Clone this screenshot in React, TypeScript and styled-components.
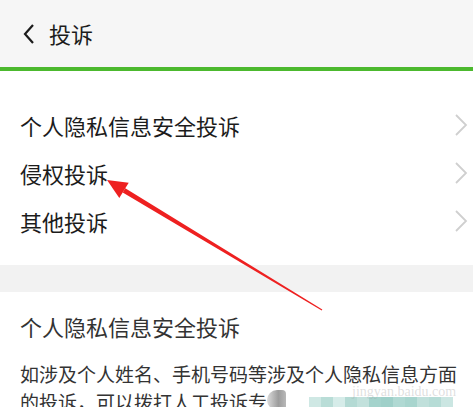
import React from "react";
import styled, { createGlobalStyle } from "styled-components";

const GlobalStyle = createGlobalStyle`
  html, body {
    margin: 0;
    padding: 0;
    background: #fff;
  }
`;

const Page = styled.div`
  position: relative;
  width: 473px;
  height: 407px;
  overflow: hidden;
  background: #fff;
  font-family: "Noto Sans CJK SC", "Noto Sans", sans-serif;
  color: #1c1c1c;
`;

const Header = styled.div`
  height: 67px;
  background: #f6f6f6;
  border-bottom: 4px solid #4cb92e;
  display: flex;
  align-items: center;
  padding-left: 22px;
  gap: 13px;
`;

const Title = styled.div`
  font-size: 22px;
  line-height: 1;
  margin-top: -2px;
`;

const List = styled.div`
  padding: 30px 0 20px;
`;

const Row = styled.div`
  height: 48px;
  display: flex;
  align-items: center;
  justify-content: space-between;
  padding-left: 20px;
  font-size: 22px;
`;

const Chevron = styled.svg`
  margin-right: 5px;
`;

const Band = styled.div`
  height: 27px;
  background: #f2f2f2;
`;

const Section = styled.div`
  padding: 19px 20px 0;
`;

const SectionTitle = styled.div`
  font-size: 22px;
  line-height: 30px;
  color: #333;
`;

const Paragraph = styled.div`
  margin-top: 19px;
  font-size: 19px;
  line-height: 28px;
  color: #333;
  white-space: nowrap;
`;

const Line = styled.div`
  display: flex;
  height: 28px;
`;

const Blob = styled.span`
  width: 20px;
  height: 20px;
  border-radius: 10px 4px 4px 10px;
  background: linear-gradient(90deg, #dcdcdc, #9c9c9c 60%, #b8b8b8);
  margin-top: 2px;
`;

const Mosaic = styled.span`
  display: flex;
  margin-left: 23px;
  margin-top: 9px;
`;

const Cell = styled.span<{ $c: string }>`
  width: 12px;
  height: 12px;
  background: ${(p) => p.$c};
`;

const Overlay = styled.svg`
  position: absolute;
  left: 0;
  top: 0;
  pointer-events: none;
`;

const Watermark = styled.div`
  position: absolute;
  left: 352px;
  top: 384px;
  font-family: "Liberation Serif", serif;
  font-size: 14px;
  color: rgba(160, 160, 160, 0.35);
`;

const items = ["个人隐私信息安全投诉", "侵权投诉", "其他投诉"];
const cells = [
  "#cfe8e4", "#b9ddd7", "#d6ece9", "#b4dad4", "#c2e1dc", "#a4d3cc",
  "#9fd0c9", "#b0d9d3", "#a8d5ce", "#c0e0db", "#b6dcd6", "#cbe6e2",
];

const App = () => (
  <Page>
    <GlobalStyle />
    <Header>
      <svg width="14" height="22" viewBox="0 0 14 22">
        <path d="M11 2 L3 11 L11 20" fill="none" stroke="#1c1c1c" strokeWidth="2.2" />
      </svg>
      <Title>投诉</Title>
    </Header>
    <List>
      {items.map((t) => (
        <Row key={t}>
          <span>{t}</span>
          <Chevron width="14" height="24" viewBox="0 0 14 24">
            <path d="M2 2 L12 12 L2 22" fill="none" stroke="#cfcfcf" strokeWidth="1.8" />
          </Chevron>
        </Row>
      ))}
    </List>
    <Band />
    <Section>
      <SectionTitle>个人隐私信息安全投诉</SectionTitle>
      <Paragraph>
        <Line>如涉及个人姓名、手机号码等涉及个人隐私信息方面</Line>
        <Line>
          <span>的投诉，可以拨打人工投诉专</span>
          <Blob />
          <Mosaic>
            {cells.map((c, i) => (
              <Cell key={i} $c={c} />
            ))}
          </Mosaic>
        </Line>
      </Paragraph>
    </Section>
    <Watermark>jingyan.baidu.com</Watermark>
    <Overlay width="473" height="407" viewBox="0 0 473 407">
      <polygon points="125.3,188.3 122.7,192.5 321.7,310.4 322.3,309.6" fill="#ee2020" />
      <polygon points="107,180 128.7,182.7 119.3,198.1" fill="#ee2020" />
    </Overlay>
  </Page>
);

export default App;
